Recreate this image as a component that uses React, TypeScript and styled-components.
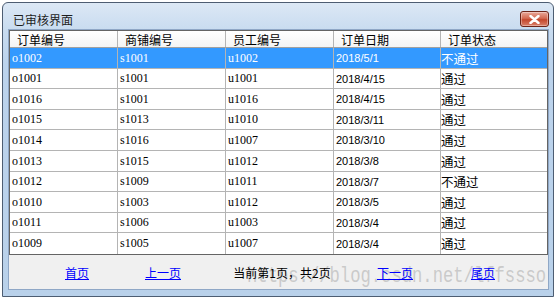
import React from "react";
import styled, { createGlobalStyle } from "styled-components";

const GlobalStyle = createGlobalStyle`
  html, body {
    margin: 0;
    padding: 0;
    background: #ffffff;
  }
`;

const Window = styled.div`
  box-sizing: border-box;
  margin: 2px 0 0 2px;
  width: 552px;
  height: 295px;
  border: 1px solid #4d5d72;
  border-radius: 6px 6px 0 0;
  background: linear-gradient(#dce8f5 0px, #c9dcf0 26px, #bcd3ec 60px, #b9d1ea 100%);
  padding: 0 4px 6px 5px;
  display: flex;
  flex-direction: column;
`;

const TitleBar = styled.div`
  height: 26px;
  display: flex;
  justify-content: space-between;
  align-items: flex-start;
`;

const Title = styled.span`
  margin: 9px 0 0 5px;
  font: 12px "Noto Sans CJK SC", sans-serif;
  line-height: 16px;
  color: #1e1e1e;
`;

const CloseButton = styled.div`
  box-sizing: border-box;
  width: 29px;
  height: 16px;
  margin: 8px 0 0 0;
  border: 1px solid #6d2418;
  border-radius: 3px;
  background: linear-gradient(#e9a99a 0%, #d46a52 45%, #c4472c 55%, #d9806a 100%);
  box-shadow: inset 0 0 0 1px rgba(255, 255, 255, 0.35);
  display: flex;
  align-items: center;
  justify-content: center;
`;

const Client = styled.div`
  flex: 1;
  background: #f0f0f0;
  border: 1px solid #8fa7c6;
  display: flex;
  flex-direction: column;
  position: relative;
  overflow: hidden;
`;

const Grid = styled.div`
  border: 1px solid #646464;
  background: #ffffff;
`;

const Row = styled.div<{ $h: number; $sel?: boolean; $head?: boolean }>`
  display: grid;
  grid-template-columns: 108px 108px 108px 107px 106px;
  height: ${(p) => p.$h}px;
  box-sizing: border-box;
  border-bottom: 1px solid ${(p) => (p.$head ? "#a0a0a0" : "#b4b4b4")};
  background: ${(p) =>
    p.$head
      ? "linear-gradient(#ffffff, #f4f4f4)"
      : p.$sel
      ? "#3399ff"
      : "#ffffff"};
  color: ${(p) => (p.$sel ? "#ffffff" : "#000000")};
  &:last-child {
    border-bottom: none;
  }
`;

const Cell = styled.div<{ $kind: "head" | "code" | "date" | "state" }>`
  box-sizing: border-box;
  border-right: 1px solid #b4b4b4;
  display: flex;
  align-items: center;
  white-space: nowrap;
  overflow: hidden;
  padding-left: ${(p) => (p.$kind === "head" ? "7px" : p.$kind === "state" ? "0px" : "2px")};
  font-family: ${(p) =>
    p.$kind === "code"
      ? '"Liberation Serif", serif'
      : p.$kind === "date"
      ? '"Liberation Sans", sans-serif'
      : '"Noto Sans CJK SC", sans-serif'};
  font-size: ${(p) =>
    p.$kind === "state" ? "12.5px" : p.$kind === "date" ? "11px" : p.$kind === "code" ? "12px" : "12px"};
  &:last-child {
    border-right: none;
  }
`;

const Footer = styled.div`
  flex: 1;
  display: grid;
  grid-template-columns: 88px 84px 154px 72px 104px;
  padding-left: 24px;
  align-items: center;
  justify-items: center;
  font: 12px "Noto Sans CJK SC", sans-serif;
`;

const PageLink = styled.a`
  color: #0000ff;
  text-decoration: underline;
  cursor: pointer;
  position: relative;
  z-index: 1;
`;

const PageInfo = styled.span`
  color: #000000;
  position: relative;
  z-index: 1;
`;

const Watermark = styled.div`
  position: absolute;
  left: 238px;
  bottom: 1px;
  font: 17.2px "Liberation Mono", monospace;
  color: rgba(170, 170, 170, 0.55);
  transform: scaleY(1.25);
  transform-origin: bottom left;
  white-space: nowrap;
  pointer-events: none;
`;

const orders = [
  ["o1002", "s1001", "u1002", "2018/5/1", "不通过"],
  ["o1001", "s1001", "u1001", "2018/4/15", "通过"],
  ["o1016", "s1001", "u1016", "2018/4/15", "通过"],
  ["o1015", "s1013", "u1010", "2018/3/11", "通过"],
  ["o1014", "s1016", "u1007", "2018/3/10", "通过"],
  ["o1013", "s1015", "u1012", "2018/3/8", "通过"],
  ["o1012", "s1009", "u1011", "2018/3/7", "不通过"],
  ["o1010", "s1003", "u1012", "2018/3/5", "通过"],
  ["o1011", "s1006", "u1003", "2018/3/4", "通过"],
  ["o1009", "s1005", "u1007", "2018/3/4", "通过"],
];

const rowHeights = [21, 20, 21, 20, 21, 21, 20, 21, 20, 21];
const heads = ["订单编号", "商铺编号", "员工编号", "订单日期", "订单状态"];

const App = () => (
  <>
    <GlobalStyle />
    <Window>
      <TitleBar>
        <Title>已审核界面</Title>
        <CloseButton>
          <svg width="11" height="9" viewBox="0 0 11 9">
            <path
              d="M1.5 1 L9.5 8 M9.5 1 L1.5 8"
              stroke="#ffffff"
              strokeWidth="2.4"
              strokeLinecap="round"
            />
          </svg>
        </CloseButton>
      </TitleBar>
      <Client>
        <Grid>
          <Row $h={17} $head>
            {heads.map((h) => (
              <Cell key={h} $kind="head">
                {h}
              </Cell>
            ))}
          </Row>
          {orders.map((o, i) => (
            <Row key={o[0]} $h={rowHeights[i]} $sel={i === 0}>
              <Cell $kind="code">{o[0]}</Cell>
              <Cell $kind="code">{o[1]}</Cell>
              <Cell $kind="code">{o[2]}</Cell>
              <Cell $kind="date">{o[3]}</Cell>
              <Cell $kind="state">{o[4]}</Cell>
            </Row>
          ))}
        </Grid>
        <Footer>
          <PageLink>首页</PageLink>
          <PageLink>上一页</PageLink>
          <PageInfo>当前第1页，共2页</PageInfo>
          <PageLink>下一页</PageLink>
          <PageLink>尾页</PageLink>
        </Footer>
        <Watermark>https://blog.csdn.net/lffssso</Watermark>
      </Client>
    </Window>
  </>
);

export default App;
